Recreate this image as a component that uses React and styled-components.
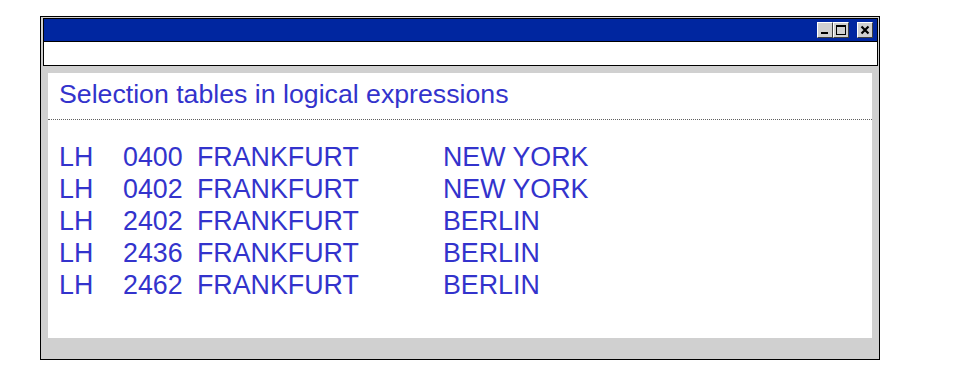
import React from "react";
import styled, { createGlobalStyle } from "styled-components";

const Global = createGlobalStyle`
  html, body { margin: 0; padding: 0; background: #ffffff; }
  body { font-family: "Liberation Sans", Arial, sans-serif; }
`;

const Page = styled.div`
  width: 960px;
  height: 384px;
  padding: 16px 0 0 40px;
  box-sizing: border-box;
`;

const Window = styled.div`
  width: 840px;
  height: 344px;
  box-sizing: border-box;
  border: 1px solid #000000;
  background: #d0d0d0;
  padding: 1px 1px 0 2px;
  display: flex;
  flex-direction: column;
`;

const TitleBar = styled.div`
  height: 24px;
  box-sizing: border-box;
  background: #0026a0;
  border: 1px solid #000000;
  display: flex;
  justify-content: flex-end;
  align-items: center;
  padding-right: 4px;
`;

const WinButton = styled.div`
  width: 16px;
  height: 16px;
  box-sizing: border-box;
  background: #d0d0d0;
  border-top: 1px solid #ffffff;
  border-left: 1px solid #ffffff;
  border-right: 1px solid #404040;
  border-bottom: 1px solid #404040;
  margin-left: ${(p) => (p.$gap ? "8px" : "0")};
  display: flex;
  align-items: center;
  justify-content: center;
  flex: none;
`;

const InputBar = styled.div`
  height: 24px;
  box-sizing: border-box;
  background: #ffffff;
  border: 1px solid #000000;
  border-top: none;
`;

const Content = styled.div`
  margin: 7px 6px 0 5px;
  height: 265px;
  background: #ffffff;
  display: flex;
  flex-direction: column;
`;

const Heading = styled.div`
  height: 47px;
  box-sizing: border-box;
  padding: 7px 0 0 11px;
  font-size: 26.7px;
  color: #3333cc;
  border-bottom: 1px dotted #606060;
  line-height: 28px;
  white-space: nowrap;
`;

const Table = styled.div`
  padding: 21px 0 0 11px;
  display: grid;
  grid-template-columns: 64px 74px 246px auto;
  grid-auto-rows: 32px;
  font-size: 26.8px;
  color: #3333cc;
  line-height: 32px;
`;

const Cell = styled.div`
  white-space: nowrap;
`;

const rows = [
  ["LH", "0400", "FRANKFURT", "NEW YORK"],
  ["LH", "0402", "FRANKFURT", "NEW YORK"],
  ["LH", "2402", "FRANKFURT", "BERLIN"],
  ["LH", "2436", "FRANKFURT", "BERLIN"],
  ["LH", "2462", "FRANKFURT", "BERLIN"],
];

export default function App() {
  return (
    <>
      <Global />
      <Page>
        <Window>
          <TitleBar>
            <WinButton>
              <svg width="12" height="12" viewBox="0 0 12 12">
                <rect x="2" y="8" width="7" height="2" fill="#000" />
              </svg>
            </WinButton>
            <WinButton>
              <svg width="12" height="12" viewBox="0 0 12 12">
                <rect x="1.5" y="1.5" width="9" height="9" fill="none" stroke="#000" />
                <rect x="1" y="1" width="10" height="2" fill="#000" />
              </svg>
            </WinButton>
            <WinButton $gap>
              <svg width="12" height="12" viewBox="0 0 12 12">
                <path d="M2.5 2.5 L9.5 9.5 M9.5 2.5 L2.5 9.5" stroke="#000" strokeWidth="2.2" />
              </svg>
            </WinButton>
          </TitleBar>
          <InputBar />
          <Content>
            <Heading>Selection tables in logical expressions</Heading>
            <Table>
              {rows.map((r, i) =>
                r.map((c, j) => <Cell key={`${i}-${j}`}>{c}</Cell>)
              )}
            </Table>
          </Content>
        </Window>
      </Page>
    </>
  );
}
